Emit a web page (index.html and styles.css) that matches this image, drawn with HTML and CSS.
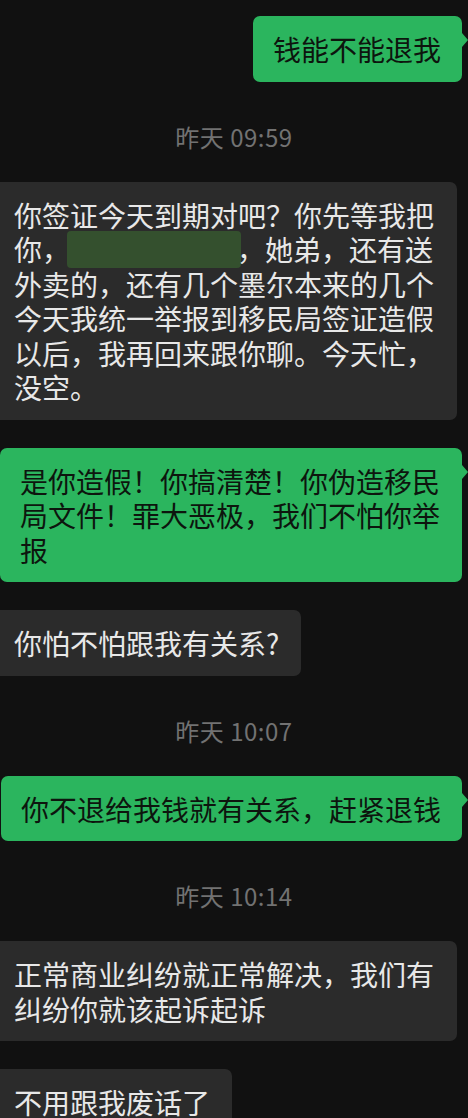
FILE: index.html
```html
<!DOCTYPE html>
<html lang="zh-CN">
<head>
<meta charset="utf-8">
<title>聊天记录</title>
<link rel="stylesheet" href="styles.css">
</head>
<body>
<main class="chat">
  <div class="msg mine"><div class="bubble green">钱能不能退我</div></div>
  <div class="time">昨天 09:59</div>
  <div class="msg theirs"><div class="bubble gray">你签证今天到期对吧？你先等我把你，<span class="redact"></span>，她弟，还有送外卖的，还有几个墨尔本来的几个今天我统一举报到移民局签证造假以后，我再回来跟你聊。今天忙，没空。</div></div>
  <div class="msg mine"><div class="bubble green">是你造假！你搞清楚！你伪造移民局文件！罪大恶极，我们不怕你举报</div></div>
  <div class="msg theirs"><div class="bubble gray">你怕不怕跟我有关系?</div></div>
  <div class="time">昨天 10:07</div>
  <div class="msg mine"><div class="bubble green">你不退给我钱就有关系，赶紧退钱</div></div>
  <div class="time">昨天 10:14</div>
  <div class="msg theirs"><div class="bubble gray">正常商业纠纷就正常解决，我们有纠纷你就该起诉起诉</div></div>
  <div class="msg theirs"><div class="bubble gray">不用跟我废话了</div></div>
</main>
</body>
</html>
```

FILE: styles.css
```css
html, body {
  margin: 0;
  padding: 0;
  background: #111111;
}

body {
  font-family: "Noto Sans CJK SC", "Noto Sans", sans-serif;
  overflow: hidden;
}

.chat {
  display: flex;
  flex-direction: column;
  gap: 28px;
  padding: 16px 0 40px;
}

.msg {
  display: flex;
}

.msg.mine {
  justify-content: flex-end;
  margin-right: 6px;
}

.msg.theirs {
  justify-content: flex-start;
  margin-left: -6px;
}

.bubble {
  position: relative;
  box-sizing: border-box;
  font-size: 28px;
  line-height: 34.5px;
  border-radius: 7px;
  word-break: break-all;
}

.bubble.green {
  background: #2bb55e;
  color: #0d150e;
  padding: 16px 21px 15px 20px;
  max-width: 462px;
}

.bubble.green::after {
  content: "";
  position: absolute;
  right: -6px;
  top: 17px;
  border-top: 7px solid transparent;
  border-bottom: 7px solid transparent;
  border-left: 6px solid #2bb55e;
}

.bubble.gray {
  background: #2b2b2b;
  color: #e8e8e8;
  padding: 16px 22px 15px 20px;
  max-width: 463px;
}

.redact {
  display: inline-block;
  width: 174px;
  height: 37px;
  margin: -1px -4px -2px -3px;
  vertical-align: top;
  background: #34502e;
  border-radius: 4px;
}

.time {
  text-align: center;
  font-size: 24px;
  letter-spacing: 0.5px;
  line-height: 30px;
  color: #727272;
  margin: 12px 0 2px;
}
```
